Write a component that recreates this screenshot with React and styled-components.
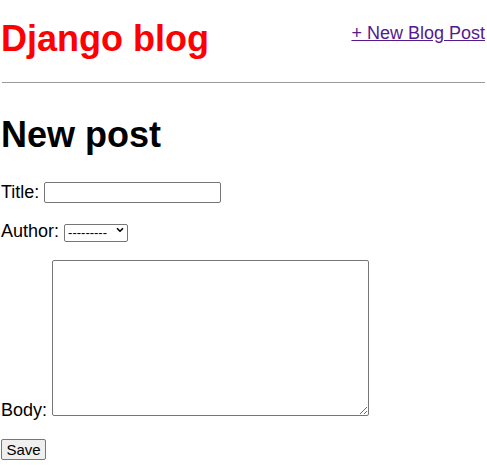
import React from 'react';
import styled, { createGlobalStyle } from 'styled-components';
import { ChevronDown } from 'lucide-react';

const GlobalStyle = createGlobalStyle`
  body {
    margin: 0;
    background: #fff;
    color: #000;
    font-family: "Liberation Sans", Arial, sans-serif;
    font-size: 18px;
  }
`;

const Page = styled.div`
  padding: 0 2px 0 1px;
`;

const Header = styled.header`
  display: flex;
  justify-content: space-between;
  align-items: flex-start;
  padding-top: 18px;
`;

const Brand = styled.h1`
  margin: 0;
  font-size: 36px;
  font-weight: bold;
  color: #ff0000;
`;

const NavLink = styled.a`
  margin-top: 5px;
  font-size: 18px;
  color: #551a8b;
  text-decoration: underline;
`;

const Rule = styled.hr`
  margin: 22px 0 0 1px;
  border: 0;
  border-top: 1px solid #9a9a9a;
  height: 0;
`;

const Title = styled.h1`
  margin: 31px 0 26px;
  font-size: 36px;
  font-weight: bold;
`;

const Field = styled.p`
  margin: 18px 0;
`;

const TextInput = styled.input`
  box-sizing: border-box;
  width: 177px;
  height: 21px;
  margin: 0;
  padding: 1px 2px;
  border: 1px solid #767676;
  border-radius: 2px;
  font: 15px "Liberation Sans", Arial, sans-serif;
`;

const SelectWrap = styled.span`
  position: relative;
  display: inline-block;
`;

const Select = styled.select`
  box-sizing: border-box;
  width: 64px;
  height: 18px;
  margin: 0;
  padding: 0 0 0 3px;
  appearance: none;
  background: #fff;
  border: 1px solid #767676;
  border-radius: 2px;
  color: #000;
  font: 13px "Liberation Sans", Arial, sans-serif;
`;

const Chevron = styled(ChevronDown)`
  position: absolute;
  right: 3px;
  top: 4px;
  pointer-events: none;
`;

const BodyArea = styled.textarea`
  box-sizing: border-box;
  width: 317px;
  height: 156px;
  margin: 0;
  border: 1px solid #767676;
  border-radius: 2px;
  font: 15px "Liberation Mono", monospace;
  vertical-align: baseline;
`;

const SaveButton = styled.button`
  box-sizing: border-box;
  width: 45px;
  height: 21px;
  margin: 0;
  padding: 0;
  background: #efefef;
  border: 1px solid #767676;
  border-radius: 2px;
  color: #000;
  font: 15px "Liberation Sans", Arial, sans-serif;
`;

export default function App() {
  return (
    <Page>
      <GlobalStyle />
      <Header>
        <Brand>Django blog</Brand>
        <NavLink href="#new">+ New Blog Post</NavLink>
      </Header>
      <Rule />
      <Title>New post</Title>
      <form>
        <Field>
          Title: <TextInput type="text" />
        </Field>
        <Field>
          Author:{' '}
          <SelectWrap>
            <Select defaultValue="">
              <option value="">---------</option>
            </Select>
            <Chevron size={10} strokeWidth={4} />
          </SelectWrap>
        </Field>
        <Field>
          Body: <BodyArea />
        </Field>
        <Field>
          <SaveButton type="submit">Save</SaveButton>
        </Field>
      </form>
    </Page>
  );
}
